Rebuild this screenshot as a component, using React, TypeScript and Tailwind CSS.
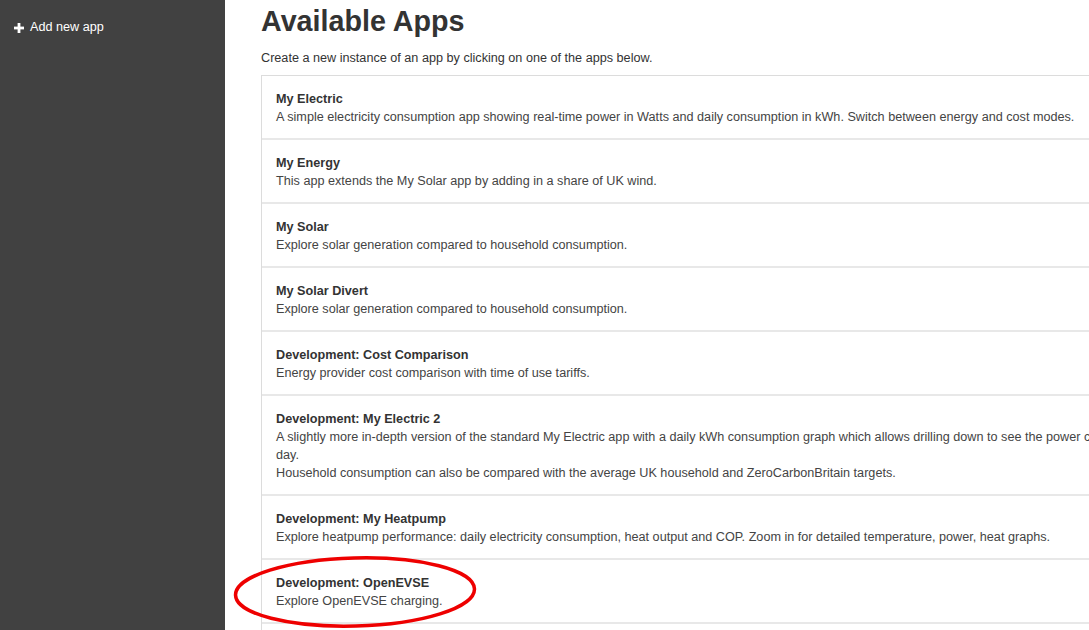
import React from 'react';

interface AppEntry {
  title: string;
  lines: string[];
}

const apps: AppEntry[] = [
  {
    title: 'My Electric',
    lines: ['A simple electricity consumption app showing real-time power in Watts and daily consumption in kWh. Switch between energy and cost modes.'],
  },
  { title: 'My Energy', lines: ['This app extends the My Solar app by adding in a share of UK wind.'] },
  { title: 'My Solar', lines: ['Explore solar generation compared to household consumption.'] },
  { title: 'My Solar Divert', lines: ['Explore solar generation compared to household consumption.'] },
  { title: 'Development: Cost Comparison', lines: ['Energy provider cost comparison with time of use tariffs.'] },
  {
    title: 'Development: My Electric 2',
    lines: [
      'A slightly more in-depth version of the standard My Electric app with a daily kWh consumption graph which allows drilling down to see the power consumption for a given day.',
      'Household consumption can also be compared with the average UK household and ZeroCarbonBritain targets.',
    ],
  },
  {
    title: 'Development: My Heatpump',
    lines: ['Explore heatpump performance: daily electricity consumption, heat output and COP. Zoom in for detailed temperature, power, heat graphs.'],
  },
  { title: 'Development: OpenEVSE', lines: ['Explore OpenEVSE charging.'] },
  { title: 'Development: Octopus Agile', lines: ['Explore Octopus Agile tariff costs over time.'] },
];

const AppItem: React.FC<{ app: AppEntry }> = ({ app }) => (
  <div className="border-b-2 border-[#e8e8e8] pl-[14px] pr-[15px] pt-[14px] pb-[12px] text-[12.65px] leading-[18px]">
    <div className="font-bold text-[#333]">{app.title}</div>
    {app.lines.map((l, i) => (
      <div key={i} className="text-[#444]">{l}</div>
    ))}
  </div>
);

export default function App() {
  return (
    <div className="flex h-[630px] w-[1089px] overflow-hidden bg-white" style={{ fontFamily: '"Liberation Sans", Arial, sans-serif' }}>
      <aside className="w-[225px] shrink-0 bg-[#414141] pt-[18px] pl-[14px]">
        <div className="flex items-center gap-[6px] text-[12.65px] text-white">
          <svg width="10" height="10" viewBox="0 0 10 10" className="mt-[1px]">
            <rect x="3.6" y="0" width="2.8" height="10" fill="#fff" />
            <rect x="0" y="3.6" width="10" height="2.8" fill="#fff" />
          </svg>
          <span>Add new app</span>
        </div>
      </aside>
      <main className="relative flex-1 overflow-hidden pl-[36px]">
        <h2 className="mt-[4px] text-[28.7px] font-bold leading-[34px] text-[#333]">Available Apps</h2>
        <p className="mt-[11px] text-[12.65px] leading-[18px] text-[#333]">Create a new instance of an app by clicking on one of the apps below.</p>
        <div className="mt-[8px] w-[985px] border-t border-l border-[#dcdcdc]">
          {apps.map((a) => (
            <AppItem key={a.title} app={a} />
          ))}
        </div>
        <svg className="pointer-events-none absolute left-[8px] top-[555px]" width="246" height="76" viewBox="0 0 246 76">
          <ellipse cx="122" cy="37" rx="119.5" ry="34" fill="none" stroke="#ee0000" strokeWidth="3.5" transform="rotate(-1.5 122 37)" />
        </svg>
      </main>
    </div>
  );
}
